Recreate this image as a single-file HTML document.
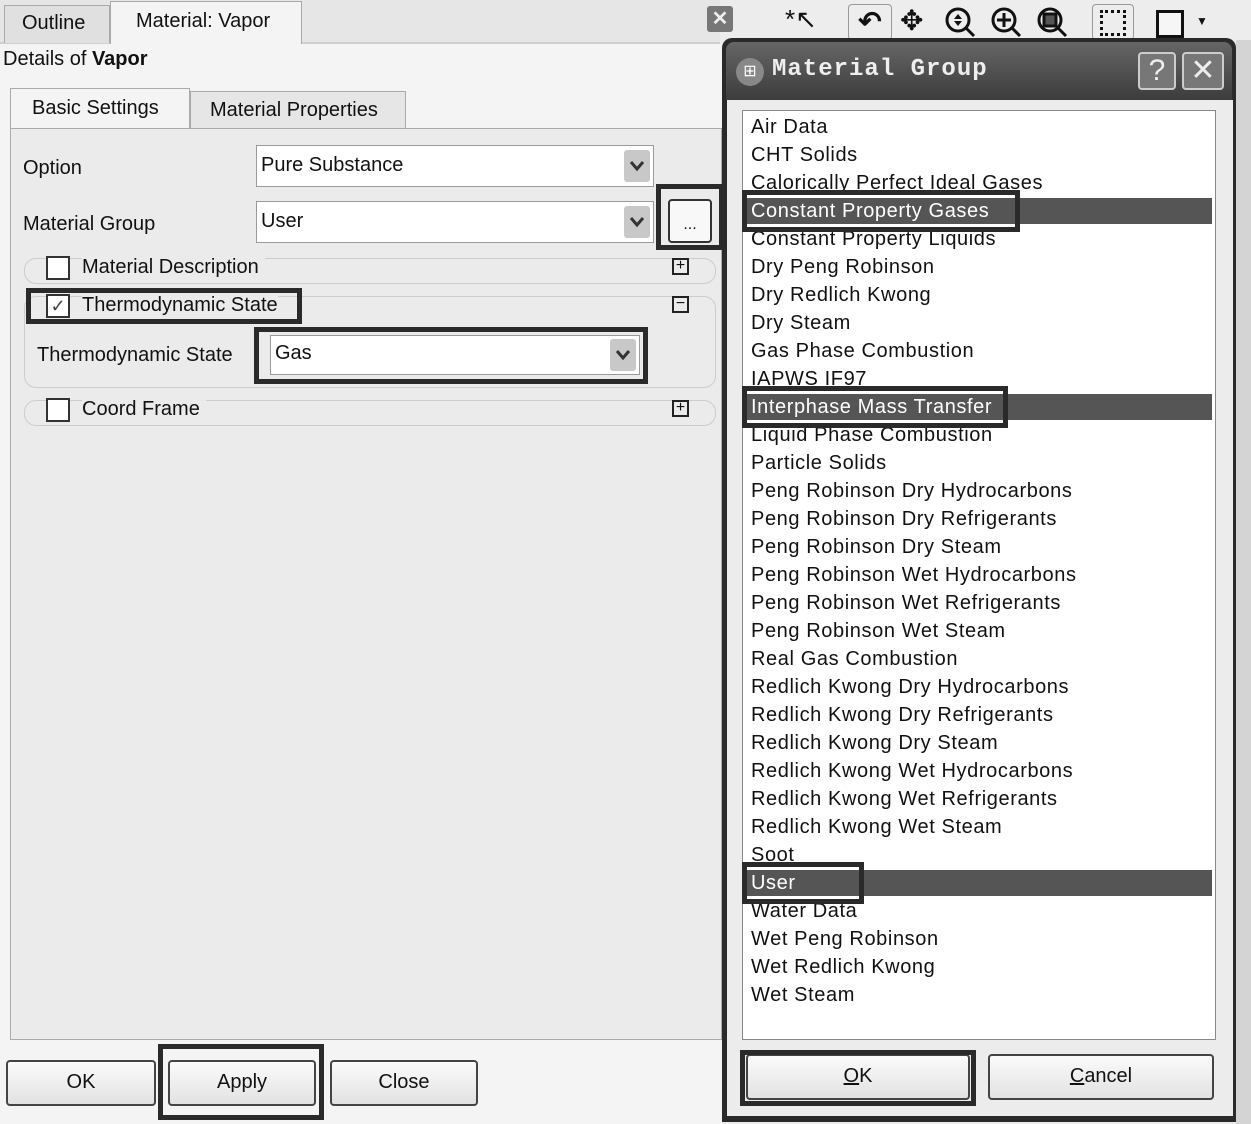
<!DOCTYPE html>
<html><head><meta charset="utf-8"><style>
*{margin:0;padding:0;box-sizing:border-box}
body{width:1251px;height:1124px;background:#ececec;font-family:"Liberation Sans",sans-serif;color:#111;position:relative;overflow:hidden}
.a{position:absolute}
.t{font-size:20px;white-space:nowrap}
.dd{position:absolute;background:#fff;border:1px solid #9a9a9a}
.dd .arr{position:absolute;right:3px;top:4px;width:26px;bottom:4px;background:#c8c8c8;border-radius:3px}
.dd .arr svg{position:absolute;left:5px;top:50%;margin-top:-6px}
.dd span{position:absolute;left:4px;top:8px;font-size:20px}
.cb{position:absolute;width:24px;height:24px;border:2px solid #333;background:#fff}
.btn{position:absolute;background:linear-gradient(#fbfbfb,#e2e2e2);border:2px solid #444;border-radius:4px;text-align:center;font-size:20px;line-height:40px}
.box{position:absolute;border:5px solid #2a2a2a}
.li{position:absolute;left:751px;font-size:20px;height:28px;line-height:28px;white-space:nowrap;letter-spacing:.6px}
.hl{position:absolute;left:746px;width:466px;height:26px;background:#555}
</style></head><body>
<div class="a" style="left:0;top:0;width:720px;height:44px;background:#e6e6e6;border-bottom:2px solid #cfcfcf"></div>
<div class="a" style="left:4px;top:5px;width:106px;height:38px;border:1px solid #aaa;border-bottom:none;background:#e0e0e0"></div>
<div class="a t" style="left:22px;top:12px">Outline</div>
<div class="a" style="left:110px;top:1px;width:192px;height:44px;border:1px solid #aaa;border-bottom:none;background:#f4f4f4"></div>
<div class="a t" style="left:136px;top:10px">Material: Vapor</div>
<div class="a" style="left:707px;top:6px;width:26px;height:26px;background:#777;border-radius:3px;color:#eee;font-size:20px;text-align:center;line-height:26px;font-weight:bold">✕</div>
<div class="a" style="left:760px;top:0;width:491px;height:40px;background:#ededed"></div>
<div class="a" style="left:785px;top:4px;font-size:26px">*↖</div>
<div class="a" style="left:848px;top:4px;width:44px;height:36px;border:1px solid #999;border-radius:4px;font-size:28px;text-align:center;line-height:34px;font-weight:bold">↶</div>
<div class="a" style="left:900px;top:4px;font-size:28px">✥</div>
<svg class="a" style="left:940px;top:4px" width="140" height="36"><g fill="none" stroke="#111" stroke-width="3"><circle cx="18" cy="16" r="11"/><line x1="26" y1="24" x2="34" y2="32"/><circle cx="64" cy="16" r="11"/><line x1="72" y1="24" x2="80" y2="32"/><line x1="57" y1="16" x2="71" y2="16"/><line x1="64" y1="9" x2="64" y2="23"/><circle cx="110" cy="16" r="11"/><line x1="118" y1="24" x2="126" y2="32"/><rect x="104" y="10" width="12" height="12" fill="#555"/></g><path d="M14 15l4-5 4 5zM14 17l4 5 4-5z" fill="#111"/></svg>
<div class="a" style="left:1092px;top:4px;width:42px;height:36px;border:1px solid #999;border-radius:4px"></div>
<div class="a" style="left:1100px;top:10px;width:26px;height:26px;border:3px dotted #111"></div>
<div class="a" style="left:1156px;top:10px;width:28px;height:28px;border:3px solid #111;background:#f6f6f6"></div>
<div class="a" style="left:1196px;top:14px;font-size:12px">▼</div>
<div class="a" style="left:0;top:44px;width:722px;height:1080px;background:#f4f4f4"></div>
<div class="a t" style="left:3px;top:48px">Details of <b>Vapor</b></div>
<div class="a" style="left:10px;top:88px;width:180px;height:42px;border:1px solid #aaa;border-bottom:none;background:#f4f4f4"></div>
<div class="a t" style="left:32px;top:97px">Basic Settings</div>
<div class="a" style="left:190px;top:91px;width:216px;height:38px;border:1px solid #aaa;border-bottom:none;background:#e6e6e6"></div>
<div class="a t" style="left:210px;top:99px">Material Properties</div>
<div class="a" style="left:10px;top:128px;width:712px;height:912px;border:1px solid #aaa;background:#ebebeb"></div>
<div class="a t" style="left:23px;top:157px">Option</div>
<div class="dd" style="left:256px;top:145px;width:398px;height:42px"><span>Pure Substance</span><div class="arr"><svg width="16" height="12"><path d="M2 2l6 7 6-7" fill="none" stroke="#333" stroke-width="3"/></svg></div></div>
<div class="a t" style="left:23px;top:213px">Material Group</div>
<div class="dd" style="left:256px;top:201px;width:398px;height:42px"><span>User</span><div class="arr"><svg width="16" height="12"><path d="M2 2l6 7 6-7" fill="none" stroke="#333" stroke-width="3"/></svg></div></div>
<div class="a" style="left:668px;top:199px;width:44px;height:44px;border:2px solid #333;border-radius:4px;background:#f8f8f8;text-align:center;line-height:48px;font-size:16px">...</div>
<div class="box" style="left:656px;top:184px;width:68px;height:66px"></div>
<div class="a" style="left:24px;top:258px;width:692px;height:26px;border:1px solid #ccc;border-radius:12px"></div>
<div class="cb" style="left:46px;top:256px"></div>
<div class="a t" style="left:82px;top:256px;background:#ebebeb;padding-right:6px">Material Description</div>
<div class="a" style="left:672px;top:258px;width:17px;height:17px;border:2px solid #222;font-size:16px;line-height:12px;text-align:center;background:#ebebeb">+</div>
<div class="a" style="left:24px;top:296px;width:692px;height:92px;border:1px solid #ccc;border-radius:12px"></div>
<div class="cb" style="left:46px;top:294px;font-size:18px;line-height:20px;text-align:center;color:#444">✓</div>
<div class="a t" style="left:82px;top:294px;background:#ebebeb">Thermodynamic State</div>
<div class="box" style="left:26px;top:288px;width:276px;height:36px"></div>
<div class="a" style="left:672px;top:296px;width:17px;height:17px;border:2px solid #222;font-size:16px;line-height:12px;text-align:center;background:#ebebeb">−</div>
<div class="a t" style="left:37px;top:344px">Thermodynamic State</div>
<div class="dd" style="left:270px;top:335px;width:370px;height:40px"><span style="top:6px">Gas</span><div class="arr" style="top:3px;bottom:3px"><svg width="16" height="12"><path d="M2 2l6 7 6-7" fill="none" stroke="#333" stroke-width="3"/></svg></div></div>
<div class="box" style="left:254px;top:327px;width:394px;height:57px"></div>
<div class="a" style="left:24px;top:400px;width:692px;height:26px;border:1px solid #ccc;border-radius:12px"></div>
<div class="cb" style="left:46px;top:398px"></div>
<div class="a t" style="left:82px;top:398px;background:#ebebeb;padding-right:6px">Coord Frame</div>
<div class="a" style="left:672px;top:400px;width:17px;height:17px;border:2px solid #222;font-size:16px;line-height:12px;text-align:center;background:#ebebeb">+</div>
<div class="btn" style="left:6px;top:1060px;width:150px;height:46px">OK</div>
<div class="btn" style="left:168px;top:1060px;width:148px;height:46px">Apply</div>
<div class="box" style="left:158px;top:1044px;width:166px;height:76px"></div>
<div class="btn" style="left:330px;top:1060px;width:148px;height:46px">Close</div>
<div class="a" style="left:1236px;top:40px;width:15px;height:1084px;background:#d4d4d4"></div>
<div class="a" style="left:722px;top:38px;width:514px;height:1084px;background:#2a2a2a;border-radius:10px 10px 0 0"></div>
<div class="a" style="left:726px;top:42px;width:506px;height:58px;background:linear-gradient(#666,#3c3c3c);border-radius:8px 8px 0 0"></div>
<div class="a" style="left:736px;top:58px;width:28px;height:28px;border-radius:50%;background:#888;color:#fff;font-size:16px;text-align:center;line-height:28px">⊞</div>
<div class="a" style="left:772px;top:56px;font-family:'Liberation Mono',monospace;font-weight:bold;font-size:24px;color:#eee;letter-spacing:1px">Material Group</div>
<div class="a" style="left:1138px;top:52px;width:38px;height:38px;border:2px solid #ccc;border-radius:4px;background:#777;color:#eee;font-size:30px;text-align:center;line-height:34px">?</div>
<div class="a" style="left:1182px;top:52px;width:42px;height:38px;border:2px solid #ccc;border-radius:4px;background:#777;color:#eee;font-size:30px;text-align:center;line-height:34px">✕</div>
<div class="a" style="left:727px;top:100px;width:506px;height:1016px;background:#ececec"></div>
<div class="a" style="left:742px;top:110px;width:474px;height:930px;background:#fff;border:1px solid #888"></div>
<div class="hl" style="top:198px"></div>
<div class="hl" style="top:394px"></div>
<div class="hl" style="top:870px"></div>
<div class="li" style="top:113px">Air Data</div>
<div class="li" style="top:141px">CHT Solids</div>
<div class="li" style="top:169px">Calorically Perfect Ideal Gases</div>
<div class="li" style="top:197px;color:#fff">Constant Property Gases</div>
<div class="li" style="top:225px">Constant Property Liquids</div>
<div class="li" style="top:253px">Dry Peng Robinson</div>
<div class="li" style="top:281px">Dry Redlich Kwong</div>
<div class="li" style="top:309px">Dry Steam</div>
<div class="li" style="top:337px">Gas Phase Combustion</div>
<div class="li" style="top:365px">IAPWS IF97</div>
<div class="li" style="top:393px;color:#fff">Interphase Mass Transfer</div>
<div class="li" style="top:421px">Liquid Phase Combustion</div>
<div class="li" style="top:449px">Particle Solids</div>
<div class="li" style="top:477px">Peng Robinson Dry Hydrocarbons</div>
<div class="li" style="top:505px">Peng Robinson Dry Refrigerants</div>
<div class="li" style="top:533px">Peng Robinson Dry Steam</div>
<div class="li" style="top:561px">Peng Robinson Wet Hydrocarbons</div>
<div class="li" style="top:589px">Peng Robinson Wet Refrigerants</div>
<div class="li" style="top:617px">Peng Robinson Wet Steam</div>
<div class="li" style="top:645px">Real Gas Combustion</div>
<div class="li" style="top:673px">Redlich Kwong Dry Hydrocarbons</div>
<div class="li" style="top:701px">Redlich Kwong Dry Refrigerants</div>
<div class="li" style="top:729px">Redlich Kwong Dry Steam</div>
<div class="li" style="top:757px">Redlich Kwong Wet Hydrocarbons</div>
<div class="li" style="top:785px">Redlich Kwong Wet Refrigerants</div>
<div class="li" style="top:813px">Redlich Kwong Wet Steam</div>
<div class="li" style="top:841px">Soot</div>
<div class="li" style="top:869px;color:#fff">User</div>
<div class="li" style="top:897px">Water Data</div>
<div class="li" style="top:925px">Wet Peng Robinson</div>
<div class="li" style="top:953px">Wet Redlich Kwong</div>
<div class="li" style="top:981px">Wet Steam</div>
<div class="box" style="left:742px;top:190px;width:278px;height:42px"></div>
<div class="box" style="left:742px;top:386px;width:266px;height:42px"></div>
<div class="box" style="left:742px;top:862px;width:122px;height:42px"></div>
<div class="btn" style="left:746px;top:1054px;width:224px;height:46px"><u>O</u>K</div>
<div class="box" style="left:740px;top:1050px;width:236px;height:56px"></div>
<div class="btn" style="left:988px;top:1054px;width:226px;height:46px"><u>C</u>ancel</div>
</body></html>
